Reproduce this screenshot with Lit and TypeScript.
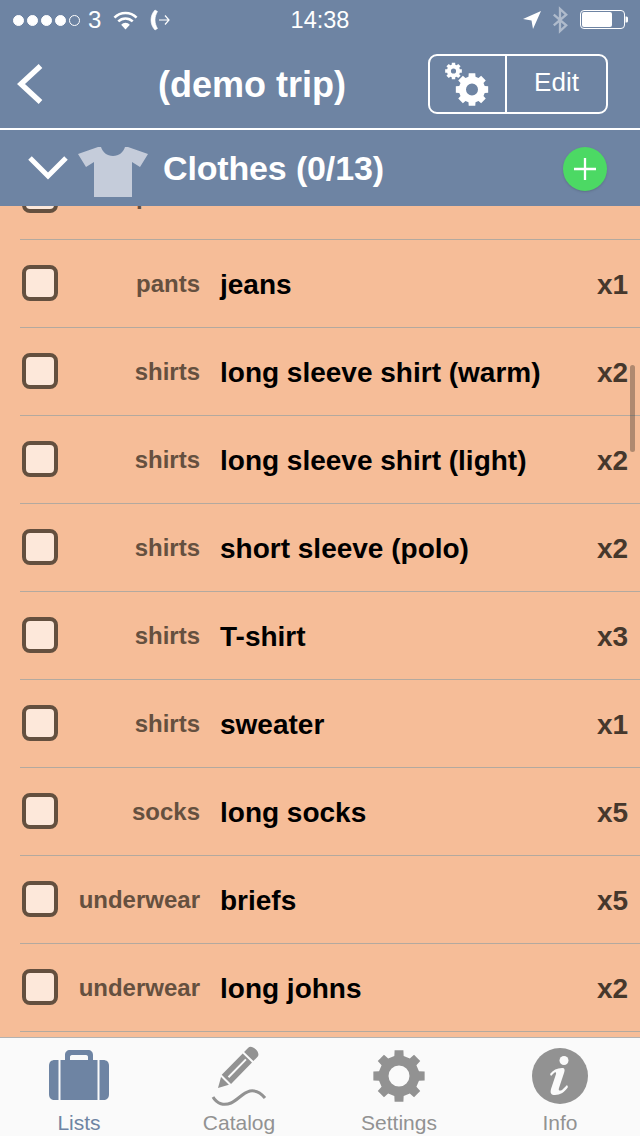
import { LitElement, html, css, svg } from "lit";
import { customElement } from "lit/decorators.js";

const rows: [string, string, string][] = [
  ["pants", "shorts", "x1"],
  ["pants", "jeans", "x1"],
  ["shirts", "long sleeve shirt (warm)", "x2"],
  ["shirts", "long sleeve shirt (light)", "x2"],
  ["shirts", "short sleeve (polo)", "x2"],
  ["shirts", "T-shirt", "x3"],
  ["shirts", "sweater", "x1"],
  ["socks", "long socks", "x5"],
  ["underwear", "briefs", "x5"],
  ["underwear", "long johns", "x2"],
];

function gearPath(cx: number, cy: number, r: number, inner: number, hole: number, teeth: number, tw: number) {
  let d = "";
  for (let i = 0; i < teeth; i++) {
    const a = (i * 2 * Math.PI) / teeth;
    const p = (rad: number, off: number) => {
      const x = cx + rad * Math.sin(a + off);
      const y = cy - rad * Math.cos(a + off);
      return `${x.toFixed(2)} ${y.toFixed(2)}`;
    };
    d += `${i === 0 ? "M" : "L"}${p(inner, -tw * 1.35)} L${p(r, -tw)} L${p(r, tw)} L${p(inner, tw * 1.35)} `;
  }
  d += "Z ";
  d += `M${cx - hole} ${cy} a${hole} ${hole} 0 1 0 ${hole * 2} 0 a${hole} ${hole} 0 1 0 ${-hole * 2} 0 Z`;
  return d;
}

@customElement("app-root")
export class AppRoot extends LitElement {
  static styles = css`
    :host {
      display: flex;
      flex-direction: column;
      width: 640px;
      height: 1136px;
      overflow: hidden;
      font-family: "Liberation Sans", Arial, sans-serif;
      background: #f6bd98;
    }
    .top {
      background: #6e84a3;
      color: #fff;
      flex: none;
    }
    .status {
      height: 40px;
      display: flex;
      align-items: center;
      padding: 0 12px 0 13px;
      font-size: 24px;
      position: relative;
    }
    .status .left {
      display: flex;
      align-items: center;
      flex: 1;
    }
    .dots {
      display: flex;
      gap: 3px;
      margin-right: 8px;
    }
    .dot {
      width: 11px;
      height: 11px;
      box-sizing: border-box;
      border-radius: 50%;
      background: #fff;
      border: 1px solid #fff;
    }
    .dot.off {
      background: none;
    }
    .carrier {
      font-size: 24px;
      font-weight: 400;
      margin-right: 12px;
      line-height: 26px;
    }
    .phone {
      margin-left: 12px;
    }
    .time {
      font-size: 23.5px;
      position: absolute;
      left: 0;
      right: 0;
      text-align: center;
    }
    .right {
      display: flex;
      align-items: center;
      gap: 11px;
    }
    .battery {
      margin-left: 1px;
    }
    .nav {
      height: 88px;
      box-sizing: border-box;
      display: flex;
      align-items: center;
      position: relative;
      padding-left: 16px;
    }
    .title {
      position: absolute;
      left: 158px;
      top: 25px;
      font-size: 36px;
      font-weight: 700;
      line-height: 40px;
      white-space: nowrap;
    }
    .seg {
      position: absolute;
      left: 428px;
      top: 14px;
      width: 180px;
      height: 60px;
      box-sizing: border-box;
      border: 2px solid #fff;
      border-radius: 9px;
      display: flex;
    }
    .seg .gear {
      width: 75px;
      border-right: 2px solid #fff;
      display: flex;
      align-items: center;
      justify-content: center;
      flex: none;
    }
    .seg .edit {
      flex: 1;
      text-align: center;
      font-size: 26px;
      line-height: 52px;
    }
    .rule {
      height: 2px;
      background: #fff;
    }
    .section {
      height: 76px;
      display: flex;
      align-items: center;
      position: relative;
      padding-left: 28px;
    }
    .section .name {
      font-size: 34px;
      font-weight: 700;
      letter-spacing: -0.15px;
      margin-left: 15px;
      white-space: nowrap;
    }
    .section .tee {
      margin: 8px 0 0 10px;
    }
    .add {
      position: absolute;
      left: 563px;
      top: 17px;
      width: 44px;
      height: 44px;
      border-radius: 50%;
      background: #4cd964;
      box-shadow: 0 1px 2px rgba(60, 70, 80, 0.3);
    }
    .list {
      flex: 1;
      min-height: 0;
      overflow: hidden;
      position: relative;
    }
    .rows {
      margin-top: -54px;
      padding-left: 20px;
    }
    .row {
      height: 88px;
      box-sizing: border-box;
      border-bottom: 1px solid #b3a99f;
      display: flex;
      align-items: center;
    }
    .box {
      width: 36px;
      height: 36px;
      box-sizing: border-box;
      border: 4px solid #64503f;
      border-radius: 8px;
      background: #fde8da;
      margin: -2px 0 0 2px;
      flex: none;
    }
    .cat {
      width: 142px;
      text-align: right;
      font-size: 24px;
      font-weight: 700;
      color: #65503f;
      flex: none;
    }
    .item {
      margin: 2px 0 0 20px;
      flex: 1;
      font-size: 28px;
      font-weight: 700;
      color: #000;
      white-space: nowrap;
    }
    .qty {
      width: 43px;
      margin-top: 2px;
      font-size: 28px;
      font-weight: 700;
      color: #46382c;
      flex: none;
    }
    .scroll {
      position: absolute;
      left: 630px;
      top: 159px;
      width: 5px;
      height: 87px;
      border-radius: 3px;
      background: rgba(70, 60, 50, 0.4);
    }
    .tabs {
      flex: none;
      height: 99px;
      box-sizing: border-box;
      border-top: 1px solid #b2b2b2;
      background: #fafafa;
      display: grid;
      grid-template-columns: 158px 162px 158px 162px;
    }
    .tab {
      display: flex;
      flex-direction: column;
      align-items: center;
      color: #929292;
      font-size: 21px;
      position: relative;
    }
    .tab.last {
      padding-left: 2px;
    }
    .tab.on {
      color: #6e84a3;
    }
    .tab svg {
      height: 72px;
      display: block;
    }
    .tab span {
      line-height: 24px;
      margin-top: 1px;
    }
  `;

  render() {
    return html`
      <div class="top">
        <div class="status">
          <div class="left">
            <div class="dots">
              <i class="dot"></i><i class="dot"></i><i class="dot"></i><i class="dot"></i><i class="dot off"></i>
            </div>
            <span class="carrier">3</span>
            <svg width="25" height="20" viewBox="0 0 26 20" fill="none" stroke="#fff" stroke-width="2.6">
              <path d="M1.500 7.500a16 16 0 0 1 23 0" />
              <path d="M5.500 11.500a10.500 10.500 0 0 1 15 0" />
              <path d="M13 20l-4.500-5a6 6 0 0 1 9 0z" fill="#fff" stroke="none" />
            </svg>
            <svg class="phone" width="20" height="22" viewBox="0 0 20 22" fill="none" stroke="#fff">
              <path d="M5 1C2 4 1 8 1 11s1 7 4 10l2.500-1.500C6 17 5 14 5 11S6 5 7.500 2.500z" fill="#fff" stroke-width=".6" />
              <path d="M9 11h10M15 6.500l4 4.500-4 4.500" stroke-width="1.200" />
            </svg>
          </div>
          <div class="time">14:38</div>
          <div class="right">
            <svg width="18" height="20" viewBox="0 0 18 20"><path d="M18 1L0 9l8.500 1.500L10 19z" fill="#fff" /></svg>
            <svg width="16" height="28" viewBox="0 0 18 28" fill="none" stroke="#fff" stroke-opacity=".45" stroke-width="2.600">
              <path d="M2 8l14 12-7 6.500V1.500l7 6.500L2 20" />
            </svg>
            <svg class="battery" width="48" height="20" viewBox="0 0 48 20">
              <rect x=".5" y=".5" width="44" height="18" rx="3.500" fill="none" stroke="#fff" />
              <rect x="2" y="2" width="30" height="15" rx="2" fill="#fff" />
              <path d="M45.500 6.500h1a1.500 1.500 0 0 1 1.500 1.500v3a1.500 1.500 0 0 1-1.500 1.500h-1z" fill="#fff" />
            </svg>
          </div>
        </div>
        <div class="nav">
          <svg width="28" height="42" viewBox="0 0 28 42" fill="none" stroke="#fff" stroke-width="5.400">
            <path d="M24.500 3L5 21l19.500 18" />
          </svg>
          <div class="title">(demo trip)</div>
          <div class="seg">
            <div class="gear">
              <svg width="46" height="46" viewBox="0 0 46 46">
                ${svg`<path fill="#fff" fill-rule="evenodd" d="${gearPath(8.5, 10, 8.5, 6.6, 2.6, 8, 0.2)}" />`}
                ${svg`<path fill="#fff" fill-rule="evenodd" d="${gearPath(27, 28.5, 16.5, 13.2, 6, 8, 0.2)}" />`}
              </svg>
            </div>
            <div class="edit">Edit</div>
          </div>
        </div>
        <div class="rule"></div>
        <div class="section">
          <svg width="40" height="26" viewBox="0 0 40 26" fill="none" stroke="#fff" stroke-width="5">
            <path d="M2 3l18 18L38 3" />
          </svg>
          <svg class="tee" width="70" height="50" viewBox="0 0 70 50">
            <path fill="#c5ccda" d="M0 7L20 0h3c1.500 5 6 9 12 9s10.500-4 12-9h3l20 7-8 13-8-5v35H16V15l-8 5z" />
          </svg>
          <div class="name">Clothes (0/13)</div>
          <div class="add">
            <svg width="44" height="44" viewBox="0 0 44 44" fill="none" stroke="#fff" stroke-width="2.300">
              <path d="M22 11v22M11 22h22" />
            </svg>
          </div>
        </div>
      </div>
      <div class="list">
        <div class="rows">
          ${rows.map(
            ([c, n, q]) => html`
              <div class="row">
                <div class="box"></div>
                <div class="cat">${c}</div>
                <div class="item">${n}</div>
                <div class="qty">${q}</div>
              </div>
            `
          )}
        </div>
        <div class="scroll"></div>
      </div>
      <div class="tabs">
        <div class="tab on">
          <svg width="64" height="72" viewBox="0 0 64 72">
            <path fill="#6e84a3" fill-rule="evenodd" d="M18 22v-5c0-3 2-5 5-5h18c3 0 5 2 5 5v5h-5v-3c0-1-.5-2-2-2H25c-1.500 0-2 1-2 2v3z" />
            <path fill="#6e84a3" d="M11.500 22H8c-4 0-6 2-6 6v28c0 4 2 6 6 6h3.500zM13.500 22h37v40h-37zM52.500 22v40H56c4 0 6-2 6-6V28c0-4-2-6-6-6z" />
          </svg>
          <span>Lists</span>
        </div>
        <div class="tab">
          <svg width="64" height="72" viewBox="0 0 64 72">
            <g fill="#929292" transform="translate(11 50) rotate(-45.700)">
              <path d="M0 0L10 -5.500V5.500z" />
              <path fill-rule="evenodd" d="M12 -6.500H42V6.500H12zM15 -1V1H40V-1z" />
              <path d="M44 -6.500H50c2.500 0 4 3 4 6.500s-1.500 6.500-4 6.500H44z" />
            </g>
            <path d="M6 59c4 7 11 9 18 6s11-10 19-12c6-1 11 2 15 7" fill="none" stroke="#929292" stroke-width="3" />
          </svg>
          <span>Catalog</span>
        </div>
        <div class="tab">
          <svg width="64" height="72" viewBox="0 0 64 72">
            ${svg`<path fill="#929292" fill-rule="evenodd" d="${gearPath(32, 38, 26, 20.5, 10.5, 8, 0.17)}" />`}
          </svg>
          <span>Settings</span>
        </div>
        <div class="tab last">
          <svg width="64" height="72" viewBox="0 0 64 72">
            <circle cx="32" cy="38" r="28" fill="#929292" />
            <circle cx="36" cy="22.500" r="4.500" fill="#fafafa" />
            <path d="M22 36c3-4 7-6 12-6 3 0 3 2 2 5l-5 15c-1 3 1 3 3 2l5-5 1 2c-3 5-8 8-13 8-4 0-5-2-4-6l5-15c.5-2-1-2-2-1l-3 3z" fill="#fafafa" />
          </svg>
          <span>Info</span>
        </div>
      </div>
    `;
  }
}
